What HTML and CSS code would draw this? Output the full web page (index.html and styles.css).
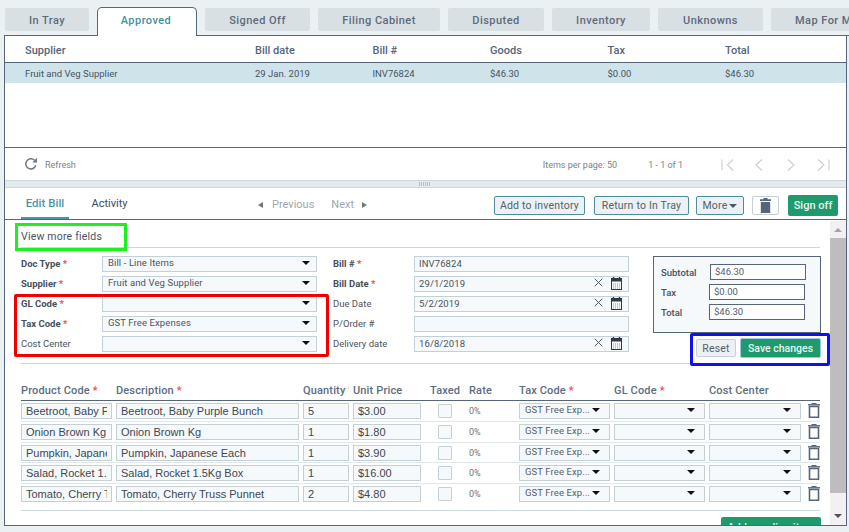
FILE: index.html
```html
<!DOCTYPE html>
<html lang="en">
<head>
<meta charset="utf-8">
<title>Approved bills</title>
<link rel="stylesheet" href="styles.css">
</head>
<body>
<svg class="defs" width="0" height="0" aria-hidden="true">
  <symbol id="cal" viewBox="0 0 11 13"><path d="M2.5 0v2M8.500 0v2" stroke="#2f3a48" stroke-width="1.4" fill="none"/><rect x=".5" y="1.500" width="10" height="11" fill="none" stroke="#2f3a48"/><rect x=".5" y="1.500" width="10" height="3" fill="#2f3a48"/><path d="M2 7h7M2 9h7M2 11h7" stroke="#8b949e" stroke-dasharray="1 1" fill="none"/></symbol>
  <symbol id="x" viewBox="0 0 9 9"><path d="M.7.7l7.600 7.600M8.300.7L.7 8.300" stroke="#4a5566" stroke-width="1" fill="none"/></symbol>
  <symbol id="bin" viewBox="0 0 12 15"><path d="M0 1.800h12" stroke="#56657a" stroke-width="1.400"/><path d="M3.500.5h5" stroke="#56657a" stroke-width="1"/><path d="M1.500 3.500h9v10.700h-9z" fill="none" stroke="#56657a" stroke-width="1.600"/></symbol>
</svg>

<nav class="tabs">
  <a class="tab w84">In Tray</a>
  <a class="tab active">Approved</a>
  <a class="tab w105">Signed Off</a>
  <a class="tab w122">Filing Cabinet</a>
  <a class="tab w96">Disputed</a>
  <a class="tab w98">Inventory</a>
  <a class="tab w105">Unknowns</a>
  <a class="tab w120">Map For Me</a>
</nav>

<main class="panel">
  <section class="list">
    <div class="list-row list-head"><span>Supplier</span><span>Bill date</span><span>Bill #</span><span>Goods</span><span>Tax</span><span>Total</span></div>
    <div class="list-row list-item"><span>Fruit and Veg Supplier</span><span>29 Jan. 2019</span><span>INV76824</span><span>$46.30</span><span>$0.00</span><span>$46.30</span></div>
  </section>
  <footer class="pager">
    <svg class="refresh" width="14" height="14" viewBox="0 0 14 14"><path d="M11.800 8.300A5.100 5.100 0 1 1 10.500 3.200" fill="none" stroke="#6f7780" stroke-width="1.500"/><path d="M13 .8v4.600H8.400z" fill="#6f7780"/></svg>
    <span class="refresh-label">Refresh</span>
    <span class="per-page">Items per page: 50</span>
    <span class="range">1 - 1 of 1</span>
    <svg class="pages" width="110" height="12" viewBox="0 0 110 12"><path d="M1 .5v11M12 .5L6.500 6l5.500 5.500M41 .5L35 6l6 5.500M67 .5L73 6l-6 5.500M97 .5L103 6l-6 5.500M108 .5v11" fill="none" stroke="#c8cdd2" stroke-width="1.100"/></svg>
  </footer>
  <div class="splitter"><span class="grip"></span></div>

  <header class="detail-bar">
    <a class="dtab on">Edit Bill</a>
    <a class="dtab">Activity</a>
    <div class="stepper"><i class="arr-l"></i><span class="prev">Previous</span><span>Next</span><i class="arr-r"></i></div>
    <div class="actions">
      <button class="btn b-add">Add to inventory</button>
      <button class="btn b-ret">Return to In Tray</button>
      <button class="btn more">More<i class="caret"></i></button>
      <button class="btn bin-btn"><svg width="11" height="15" viewBox="0 0 11 15"><path d="M3.500 0h4v1.200h3.500v1.800H0V1.200h3.500zM.8 4h9.400v11H.8z" fill="#56657a"/></svg></button>
      <button class="btn-green">Sign off</button>
    </div>
  </header>

  <div class="detail">
    <div class="content">
      <div class="more-fields">View more fields</div>
      <section class="form">
        <div class="fields">
          <label class="lbl req">Doc Type <em>*</em></label><div class="sel">Bill - Line Items</div>
          <label class="lbl2 req">Bill # <em>*</em></label><div class="inp">INV76824</div>
          <label class="lbl req">Supplier <em>*</em></label><div class="sel">Fruit and Veg Supplier</div>
          <label class="lbl2 req">Bill Date <em>*</em></label><div class="inp date">29/1/2019<svg width="9" height="9"><use href="#x"/></svg><svg width="11" height="13"><use href="#cal"/></svg></div>
          <label class="lbl req">GL Code <em>*</em></label><div class="sel"></div>
          <label class="lbl2">Due Date</label><div class="inp date">5/2/2019<svg width="9" height="9"><use href="#x"/></svg><svg width="11" height="13"><use href="#cal"/></svg></div>
          <label class="lbl req">Tax Code <em>*</em></label><div class="sel">GST Free Expenses</div>
          <label class="lbl2">P/Order #</label><div class="inp"></div>
          <label class="lbl">Cost Center</label><div class="sel"></div>
          <label class="lbl2">Delivery date</label><div class="inp date">16/8/2018<svg width="9" height="9"><use href="#x"/></svg><svg width="11" height="13"><use href="#cal"/></svg></div>
        </div>
        <div class="side">
          <div class="totals">
            <span class="t-lbl">Subtotal</span><div class="t-val shift">$46.30</div>
            <span class="t-lbl">Tax</span><div class="t-val">$0.00</div>
            <span class="t-lbl">Total</span><div class="t-val">$46.30</div>
          </div>
          <div class="save-row">
            <button class="btn reset">Reset</button>
            <button class="btn-green save">Save changes</button>
          </div>
        </div>
      </section>

      <section class="lines">
        <div class="line line-head">
          <span>Product Code <em>*</em></span><span>Description <em>*</em></span><span class="qty-h">Quantity <em>*</em></span><span>Unit Price</span><span class="tax-h">Taxed</span><span>Rate</span><span>Tax Code <em>*</em></span><span>GL Code <em>*</em></span><span>Cost Center</span><span></span>
        </div>
        <div class="line"><input class="cell" value="Beetroot, Baby Purple Bunch" readonly><input class="cell" value="Beetroot, Baby Purple Bunch" readonly><input class="cell" value="5" readonly><input class="cell" value="$3.00" readonly><i class="check"></i><span class="rate">0%</span><div class="sel tiny">GST Free Exp...</div><div class="sel tiny"></div><div class="sel tiny"></div><svg class="del" width="12" height="15"><use href="#bin"/></svg></div>
        <div class="line"><input class="cell" value="Onion Brown Kg" readonly><input class="cell" value="Onion Brown Kg" readonly><input class="cell" value="1" readonly><input class="cell" value="$1.80" readonly><i class="check"></i><span class="rate">0%</span><div class="sel tiny">GST Free Exp...</div><div class="sel tiny"></div><div class="sel tiny"></div><svg class="del" width="12" height="15"><use href="#bin"/></svg></div>
        <div class="line"><input class="cell" value="Pumpkin, Japanese Each" readonly><input class="cell" value="Pumpkin, Japanese Each" readonly><input class="cell" value="1" readonly><input class="cell" value="$3.90" readonly><i class="check"></i><span class="rate">0%</span><div class="sel tiny">GST Free Exp...</div><div class="sel tiny"></div><div class="sel tiny"></div><svg class="del" width="12" height="15"><use href="#bin"/></svg></div>
        <div class="line"><input class="cell" value="Salad, Rocket 1.5Kg Box" readonly><input class="cell" value="Salad, Rocket 1.5Kg Box" readonly><input class="cell" value="1" readonly><input class="cell" value="$16.00" readonly><i class="check"></i><span class="rate">0%</span><div class="sel tiny">GST Free Exp...</div><div class="sel tiny"></div><div class="sel tiny"></div><svg class="del" width="12" height="15"><use href="#bin"/></svg></div>
        <div class="line last"><input class="cell" value="Tomato, Cherry Truss Punnet" readonly><input class="cell" value="Tomato, Cherry Truss Punnet" readonly><input class="cell" value="2" readonly><input class="cell" value="$4.80" readonly><i class="check"></i><span class="rate">0%</span><div class="sel tiny">GST Free Exp...</div><div class="sel tiny"></div><div class="sel tiny"></div><svg class="del" width="12" height="15"><use href="#bin"/></svg></div>
      </section>
      <div class="add-row"><button class="btn-green add">Add new line item</button></div>
    </div>
    <div class="scrollbar"><i class="sb-up"></i><span class="thumb"></span><i class="sb-down"></i></div>
  </div>
</main>

<div class="mark green"></div>
<div class="mark red"></div>
<div class="mark blue"></div>
</body>
</html>
```
FILE: styles.css
```css
* { box-sizing: border-box; }
html, body { height: 100%; }
body {
  margin: 0;
  overflow: hidden;
  position: relative;
  background: #ebf0f3;
  font-family: Roboto, "Liberation Sans", sans-serif;
  color: #4a5768;
  font-size: 10px;
}
.defs { position: absolute; }
em { color: #e8485f; font-style: normal; }
button { font-family: inherit; cursor: default; }

/* top tabs */
.tabs {
  display: flex;
  gap: 8px;
  height: 36px;
  margin-left: 4px;
  padding: 8px 0 0 1px;
  border-bottom: 1px solid #56657a;
}
.tab {
  flex: none;
  height: 23px;
  background: #d8e0e3;
  border-radius: 2px;
  color: #5d6b7a;
  font-size: 11px;
  font-weight: 500;
  letter-spacing: .45px;
  line-height: 25px;
  text-align: center;
}
.w84 { width: 84px; }
.w105 { width: 105px; }
.w122 { width: 122px; }
.w96 { width: 96px; }
.w98 { width: 98px; }
.w120 { width: 120px; text-align: left; padding-left: 24px; white-space: nowrap; }
.tab.active {
  width: 100px;
  height: 29px;
  margin-top: -1px;
  padding-right: 2px;
  background: #fff;
  border: 1px solid #56657a;
  border-bottom: 0;
  border-radius: 5px 5px 0 0;
  color: #3f919c;
  line-height: 25px;
}

/* panel */
.panel {
  width: 843px;
  height: 490px;
  margin: 0 0 0 4px;
  background: #fff;
  border: solid #56657a;
  border-width: 0 1px 1px;
  display: flex;
  flex-direction: column;
}
.list { height: 112px; border-bottom: 1px solid #56657a; flex: none; }
.list-row {
  display: grid;
  grid-template-columns: 230px 117.5px 117.500px 117.500px 117.500px 1fr;
  padding-left: 20px;
  align-items: center;
}
.list-head {
  height: 27px;
  border-bottom: 1px solid #56657a;
  font-size: 11px;
  font-weight: 500;
  color: #56657a;
  padding-top: 3px;
}
.list-item { height: 20px; background: #cfe4ea; color: #46525f; font-size: 9.500px; }

.pager {
  flex: none;
  height: 32px;
  display: flex;
  align-items: center;
  padding: 2px 0 0 19px;
  color: #7c8288;
  font-size: 9px;
}
.refresh { margin-top: -3px; }
.refresh-label { margin-left: 7px; }
.per-page { margin-left: 467px; }
.range { margin-left: 31px; }
.pages { margin-left: 38px; }

.splitter {
  flex: none;
  height: 8px;
  background: #e4ebee;
  border: solid #ccd7dc;
  border-width: 1px 0;
  display: flex;
  justify-content: center;
}
.grip { width: 12px; height: 4px; margin: 1px 0 0 -1px; background: repeating-linear-gradient(90deg, #b7c0c6 0 1px, transparent 1px 2px); }

.detail-bar {
  flex: none;
  height: 32px;
  display: flex;
  border-bottom: 1px solid #56657a;
  padding-left: 16px;
  position: relative;
}
.dtab {
  width: 48px;
  height: 31px;
  text-align: center;
  font-size: 11px;
  line-height: 31px;
  color: #414b57;
  margin-right: 16.500px;
}
.dtab.on { color: #4a97a4; font-weight: 500; font-size: 11.500px; border-bottom: 2px solid #4a97a4; }
.stepper {
  position: absolute;
  left: 253px;
  top: 10px;
  display: flex;
  align-items: center;
  color: #a0a6ac;
  font-size: 11px;
  line-height: 13px;
}
.prev { margin: 0 17px 0 9px; }
.arr-l { width: 0; height: 0; border: 3px solid transparent; border-left: 0; border-right: 5px solid #6e7780; }
.arr-r { width: 0; height: 0; border: 3px solid transparent; border-right: 0; border-left: 5px solid #6e7780; margin-left: 8px; }
.actions {
  margin-left: auto;
  margin-right: 8px;
  display: flex;
  gap: 9px;
  align-items: center;
  padding-top: 4px;
}
.btn {
  height: 19px;
  padding: 0;
  background: #ebf1f4;
  border: 1px solid #4e8c9b;
  border-radius: 2px;
  color: #56606c;
  font-size: 10.500px;
  letter-spacing: .2px;
  white-space: nowrap;
}
.b-add { width: 91px; }
.b-ret { width: 95px; margin-right: -1px; }
.more { width: 48px; display: flex; align-items: center; justify-content: center; gap: 2px; margin-left: -1px; margin-right: -1px; }
.caret { width: 0; height: 0; border: 4px solid transparent; border-bottom: 0; border-top-color: #4a5768; }
.bin-btn { width: 27px; background: #fff; border-color: #c3d0d8; display: flex; align-items: center; justify-content: center; }
.btn-green {
  height: 21px;
  width: 50px;
  padding: 0;
  background: #1f9a6c;
  border: 0;
  border-radius: 2px;
  color: #e9f7f1;
  font-size: 11px;
  font-weight: 500;
  white-space: nowrap;
}

/* detail */
.detail { flex: 1; min-height: 0; display: flex; overflow: hidden; }
.content { width: 825px; flex: none; padding-left: 16px; }
.scrollbar {
  width: 16px;
  flex: none;
  background: #f1f1f1;
  margin-top: 1px;
  display: flex;
  flex-direction: column;
  align-items: center;
  padding-top: 7px;
}
.sb-up { width: 0; height: 0; border: 4px solid transparent; border-top: 0; border-bottom-color: #a3a3a3; }
.thumb { width: 16px; height: 255px; background: #bdbdbd; margin-top: 6px; flex: none; }
.sb-down { width: 0; height: 0; border: 4px solid transparent; border-bottom: 0; border-top-color: #505050; margin-top: 21px; }

.more-fields {
  width: 799px;
  height: 28px;
  padding-top: 10px;
  border-bottom: 1px solid #cdd8dd;
  color: #4a5460;
  font-size: 10.500px;
  letter-spacing: .2px;
}
.form {
  width: 799px;
  height: 116px;
  padding-top: 8px;
  border-bottom: 1px solid #cdd8dd;
  display: flex;
}
.fields {
  display: grid;
  grid-template-columns: 81px 215px 97px 215px;
  grid-auto-rows: 16px;
  row-gap: 4px;
  flex: none;
  width: 632px;
  height: 96px;
}
.lbl, .lbl2 { font-size: 9.500px; line-height: 16px; color: #4a5460; }
.lbl2 { margin-left: 16px; }
.req { font-weight: 700; color: #46505c; }
.sel {
  height: 16px;
  background: #f5f9fc url("data:image/svg+xml,%3Csvg xmlns='http://www.w3.org/2000/svg' width='8' height='4'%3E%3Cpath d='M0 0h8L4 4z' fill='%23111'/%3E%3C/svg%3E") no-repeat right 6px top 4px;
  border: 1px solid #c3d0d8;
  padding-left: 5px;
  font-size: 9.500px;
  line-height: 11px;
  color: #4a5460;
  letter-spacing: .1px;
}
.inp {
  height: 16px;
  background: #f5f9fc;
  border: 1px solid #c3d0d8;
  padding-left: 4px;
  font-size: 9.500px;
  line-height: 14px;
  color: #4a5460;
  letter-spacing: .1px;
  display: flex;
  align-items: center;
}
.inp.date svg:first-of-type { margin-left: auto; margin-top: -3px; }
.inp.date svg:last-of-type { margin: -2px 6px 0 8px; }

.side { width: 168px; flex: none; }
.totals {
  height: 77px;
  border: 1px solid #56657a;
  background: #f5f9fc;
  display: grid;
  grid-template-columns: 48px 96px;
  grid-auto-rows: 16px;
  row-gap: 4px;
  padding: 7px 0 0 7px;
  align-items: center;
}
.t-lbl { font-size: 9.500px; font-weight: 500; color: #46505c; }
.t-val {
  height: 16px;
  width: 96px;
  background: #fff;
  border: 1px solid #56657a;
  padding-left: 4px;
  font-size: 9.500px;
  line-height: 14px;
  color: #56606c;
}
.t-val.shift { margin-left: 1px; }
.save-row { display: flex; justify-content: flex-end; gap: 4px; margin-top: 5px; align-items: center; }
.reset { width: 40px; height: 18px; border-color: #c3d0d8; }
.save { width: 81px; height: 20px; border: 1px solid #9cc5e8; font-size: 10.500px; }

.lines { width: 799px; margin-top: 20px; border-bottom: 1px solid #cdd8dd; padding-bottom: 5px; }
.line {
  display: grid;
  grid-template-columns: 91px 183px 46px 68px 40px 46px 91px 91px 92px 15px;
  column-gap: 4px;
  height: 20.750px;
  padding-top: 2px;
  border-bottom: 1px solid #e2e7ea;
  align-items: start;
}
.line.last { border-bottom: 0; }
.line-head {
  height: 17px;
  padding-top: 0;
  border-bottom: 1px solid #56657a;
  font-size: 11px;
  font-weight: 500;
  letter-spacing: .15px;
  color: #5d6d82;
  white-space: nowrap;
  line-height: 13px;
}
.tax-h { margin-left: 5px; }
.qty-h { overflow: hidden; }
.cell {
  width: 100%;
  min-width: 0;
  height: 16px;
  margin: 0;
  background: #f5f9fc;
  border: 1px solid #c3d0d8;
  border-radius: 0;
  outline: 0;
  padding: 0 4px;
  font-family: "Liberation Sans", Arial, sans-serif;
  font-size: 11px;
  color: #3f4750;
}
.check { width: 14px; height: 14px; margin: 1px 0 0 13px; border: 1px solid #c3d0d8; border-radius: 1px; background: #f5f9fc; display: block; }
.rate { font-size: 9px; line-height: 16px; color: #6b7480; }
.tiny { background-position: right 9px top 4px; color: #55606c; }
.del { margin: 0 0 0 3px; }
.add-row { width: 800px; display: flex; justify-content: flex-end; margin-top: 6px; }
.add { width: 100px; height: 22px; }

/* annotation rectangles over the screenshot */
.mark { position: absolute; pointer-events: none; border-style: solid; }
.green { left: 15px; top: 223px; width: 112px; height: 28px; border-width: 3px; border-color: #1bf21b; }
.red { left: 14px; top: 294px; width: 315px; height: 63px; border-width: 3px; border-color: #f00000; border-radius: 2px; }
.blue { left: 690px; top: 333px; width: 140px; height: 33px; border-width: 3px; border-color: #1010f0; border-radius: 2px; }
```
